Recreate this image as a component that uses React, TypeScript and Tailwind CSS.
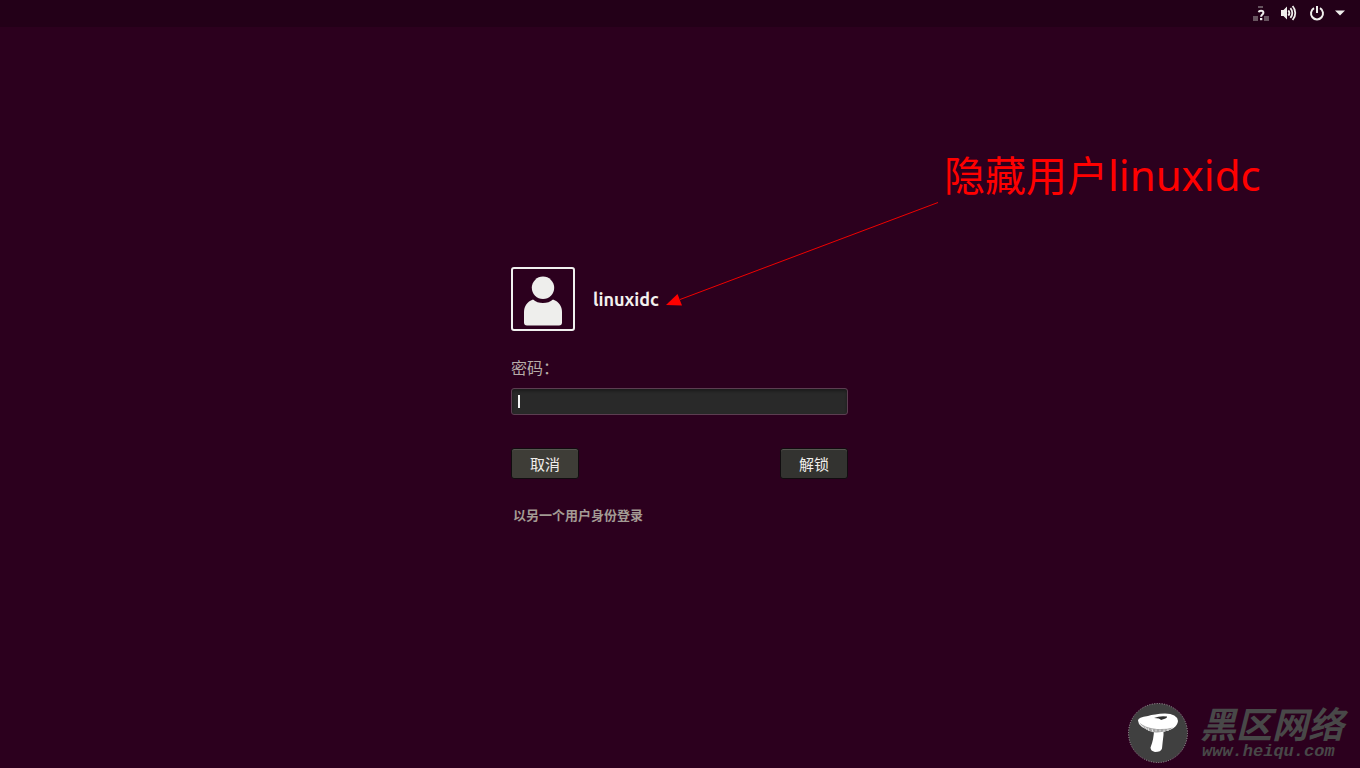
import React from 'react';

function NetworkIcon() {
  return (
    <svg width="16" height="16" viewBox="0 0 16 16" aria-hidden="true">
      <path d="M5 1h5v2H5zM0 11h5v5H0zM11 11h5v5h-5z" fill="#67545f" />
      <path d="M5.700 7.300C5.900 6.200 6.900 5.700 8 5.700c1.500 0 2.400.8 2.400 2 0 1.800-2.300 1.900-2.300 4" fill="none" stroke="#f0eeec" strokeWidth="2" />
      <path d="M7 13h2.300v2.200H7z" fill="#f0eeec" />
    </svg>
  );
}

function VolumeIcon() {
  return (
    <svg width="16" height="16" viewBox="0 0 16 16" aria-hidden="true">
      <path d="M0 5h2.500L6 1.500v13L2.500 11H0z" fill="#f0eeec" />
      <g fill="none" stroke="#f0eeec" strokeWidth="1.800">
        <path d="M7.300 5.300a4.200 4.200 0 0 1 0 5.400" />
        <path d="M9.400 3.100a7.300 7.300 0 0 1 0 9.800" />
        <path d="M11.600 1a10.500 10.500 0 0 1 0 14" />
      </g>
    </svg>
  );
}

function PowerIcon() {
  return (
    <svg width="16" height="16" viewBox="0 0 16 16" aria-hidden="true">
      <g fill="none" stroke="#f0eeec" strokeWidth="2">
        <path d="M5 3.200A6 6 0 1 0 11 3.200" />
        <path d="M8 1v7" />
      </g>
    </svg>
  );
}

function Avatar() {
  return (
    <div className="size-16 shrink-0 rounded-[3px] border-2 border-[#f0f0ef]">
      <svg width="60" height="60" viewBox="0 0 60 60" aria-hidden="true" fill="#eeeeec">
        <circle cx="30" cy="18.800" r="11.200" />
        <path d="M20 30.500C14 32.500 11 37.500 11 43V53.500q0 3 3 3h32Q49 56.500 49 53.500V43C49 37.500 46 32.500 40 30.500Q36 34 30 34T20 30.500Z" />
      </svg>
    </div>
  );
}

function Annotation() {
  return (
    <>
      <svg className="pointer-events-none absolute -top-[67px] left-[155px]" width="274" height="107" viewBox="0 0 274 107" aria-hidden="true">
        <path d="M272 2.500L14 99.500" stroke="#f00000" strokeWidth="1" />
        <path d="M0 105L11.500 94L16 105.500Z" fill="#ff0000" />
      </svg>
      <p className="absolute -top-[122px] left-[433px] whitespace-nowrap font-['Noto_Sans','Noto_Sans_CJK_SC',sans-serif] text-[42px] leading-[56px] text-[#ff0000]">
        <span className="font-['Noto_Sans_CJK_SC',sans-serif] text-[41px]">隐藏用户</span>linuxidc
      </p>
    </>
  );
}

function Watermark() {
  return (
    <footer className="flex items-center justify-end gap-3 pr-4 pb-[5px] text-[#484848]">
      <svg width="60" height="60" viewBox="0 0 60 60" aria-hidden="true">
        <circle cx="30" cy="30" r="29.500" fill="#404040" stroke="#a5a0a3" strokeWidth="1" strokeDasharray="1 1.500" />
        <path d="M26 26h9.500v6q-1 8-1.500 13.500Q33 49 27 49q-4.500-1-4.500-4.500Q26 36 26 26Z" fill="#fff" />
        <path d="M10 17.500q0-3.500 10-4.500Q26 11 37 10.500q12 0 13 7.500Q49 27 33 29 16 28.500 11 21Z" fill="#fff" />
        <path d="M11 19.500q7 5.500 18 6.500 9 .5 16-1.500-6 4.500-16 5T11 19.500Z" fill="#a3a3a3" />
        <path d="M14 22.500l2 2M17 23.500l2 3M20 25l1 3M24 26l1 3M28 26.500v2M32 26.500v2M36 26.500v2M40 26v2" stroke="#fff" strokeWidth=".7" />
        <path d="M26 15q6-2.500 13-1.500 1 1.500-6 3.500-1-2-7-2Z" fill="#303030" />
      </svg>
      <div className="flex flex-col items-start gap-[2px] italic">
        <p className="font-['Noto_Sans_CJK_SC',sans-serif] text-[36px] leading-9 font-bold">黑区网络</p>
        <p className="px-[2px] font-['Liberation_Mono',monospace] text-[17px] leading-5 font-bold">www.heiqu.com</p>
      </div>
    </footer>
  );
}

const buttonClass =
  "h-[31px] w-[68px] rounded-[3px] border border-[#110c0f] text-[15px] leading-5 text-[#f0eeeb] shadow-[inset_0_1px_0_#565650]";

export default function App() {
  return (
    <div className="flex min-h-screen flex-col overflow-hidden bg-[#2c001e] font-['Noto_Sans_CJK_SC',sans-serif]">
      <header className="flex h-[27px] items-center justify-end gap-3 bg-[#230018] pr-[15px] pb-[2px]">
        <NetworkIcon />
        <VolumeIcon />
        <PowerIcon />
        <svg className="-ml-[2px]" width="10" height="6" viewBox="0 0 10 6" aria-hidden="true">
          <path d="M0 .5h10L5 5.500Z" fill="#f0eeec" />
        </svg>
      </header>

      <main className="flex flex-1 justify-center pt-[240px]">
        <form className="relative flex w-[338px] flex-col pr-px" onSubmit={(event) => event.preventDefault()}>
          <div className="flex items-center gap-[18px]">
            <Avatar />
            <h1 className="font-['Ubuntu','Open_Sans',sans-serif] text-[18px] leading-6 font-bold text-[#f3f0ee]">linuxidc</h1>
          </div>
          <label htmlFor="password" className="mt-6 text-base leading-6 text-[#b6aca9]">密码：</label>
          <div className="relative mt-[9px]">
            <input
              id="password"
              type="password"
              autoFocus
              className="block h-[27px] w-full rounded-[3px] border border-[#5c3e51] bg-[#292929] px-[6px] text-sm text-white caret-transparent shadow-[inset_0_2px_3px_#1b1b1b] outline-none"
            />
            <span className="pointer-events-none absolute top-[7px] left-[7px] h-[13px] w-[2px] bg-[#f3f3f3]" />
          </div>
          <div className="mt-[33px] flex justify-between">
            <button type="button" className={`${buttonClass} bg-[#3e3d37]`}>取消</button>
            <button type="submit" className={`${buttonClass} bg-[#333330]`}>解锁</button>
          </div>
          <a href="#other" className="mt-[26px] self-start pl-[2px] text-[13px] leading-5 font-bold text-[#a39b94]">以另一个用户身份登录</a>
          <Annotation />
        </form>
      </main>
      <Watermark />
    </div>
  );
}
